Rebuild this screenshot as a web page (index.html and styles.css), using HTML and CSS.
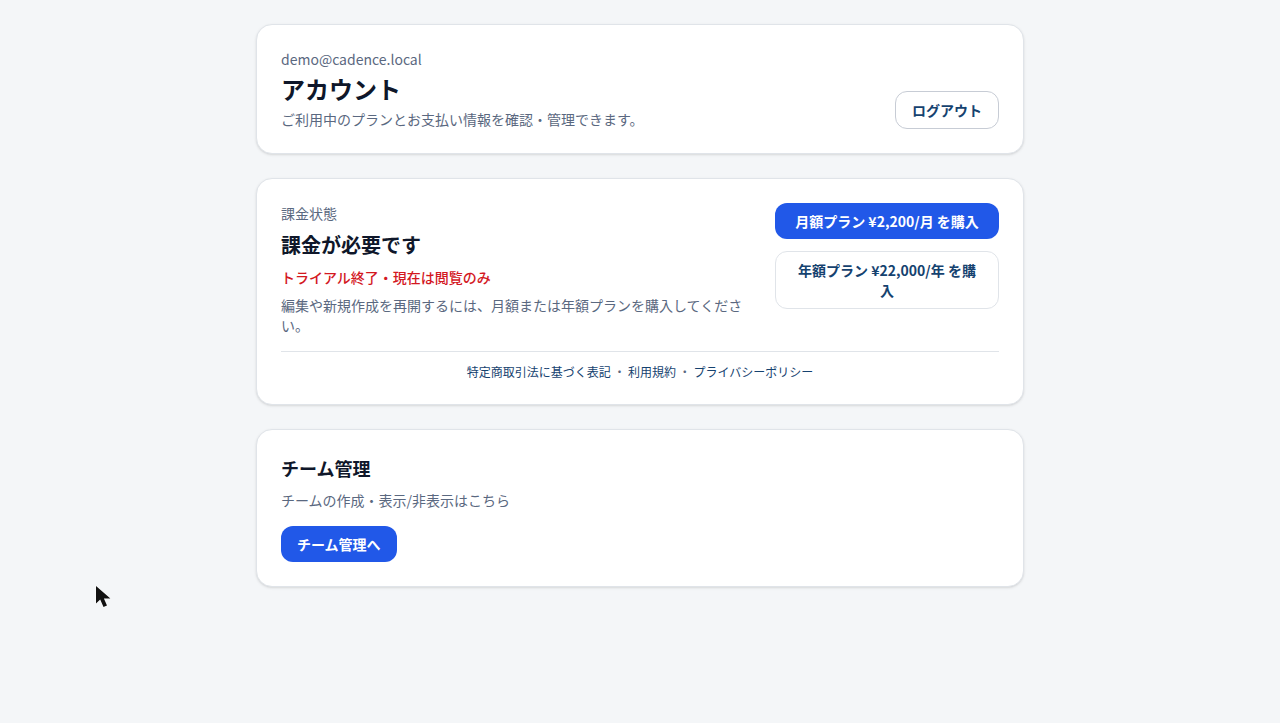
FILE: index.html
```html
<!DOCTYPE html>
<html lang="ja">
<head>
  <meta charset="utf-8">
  <title>アカウント</title>
  <link rel="stylesheet" href="styles.css">
</head>
<body>
  <main class="container">
    <section class="card account">
      <div>
        <p class="text">demo@cadence.local</p>
        <h1>アカウント</h1>
        <p class="text">ご利用中のプランとお支払い情報を確認・管理できます。</p>
      </div>
      <button type="button" class="btn btn-logout">ログアウト</button>
    </section>

    <section class="card">
      <div class="billing">
        <div class="billing-info">
          <p class="text">課金状態</p>
          <h2>課金が必要です</h2>
          <p class="text warning">トライアル終了・現在は閲覧のみ</p>
          <p class="text">編集や新規作成を再開するには、月額または年額プランを購入してください。</p>
        </div>
        <div class="plans">
          <button type="button" class="btn btn-primary">月額プラン ¥2,200/月 を購入</button>
          <button type="button" class="btn btn-outline">年額プラン ¥22,000/年 を購入</button>
        </div>
      </div>
      <div class="legal">
        <a href="#">特定商取引法に基づく表記</a>
        <span>・</span>
        <a href="#">利用規約</a>
        <span>・</span>
        <a href="#">プライバシーポリシー</a>
      </div>
    </section>

    <section class="card team">
      <h3>チーム管理</h3>
      <p class="text">チームの作成・表示/非表示はこちら</p>
      <button type="button" class="btn btn-primary">チーム管理へ</button>
    </section>
  </main>

  <svg class="cursor" width="18" height="24" viewBox="0 0 18 24">
    <path d="M1 1V18.5L5.2 14.6L8.5 22L12 20.5L8.9 13.4H15.4Z" fill="#111" stroke="#fff" stroke-width="1" paint-order="stroke"/>
  </svg>
</body>
</html>
```

FILE: styles.css
```css
* {
  box-sizing: border-box;
}

body {
  margin: 0;
  background: #f4f6f8;
  color: #0f172a;
  font-family: "Noto Sans CJK JP", sans-serif;
}

h1, h2, h3, p {
  margin: 0;
}

.container {
  display: flex;
  flex-direction: column;
  gap: 24px;
  max-width: 768px;
  margin: 0 auto;
  padding: 24px 0;
}

.card {
  padding: 24px;
  background: #fff;
  border: 1px solid #e0e4e9;
  border-radius: 16px;
  box-shadow: 0 1px 3px rgba(0, 0, 0, 0.1), 0 1px 2px -1px rgba(0, 0, 0, 0.1);
}

.account {
  display: flex;
  align-items: flex-end;
  justify-content: space-between;
}

h1 {
  margin: 4px 0;
  font-size: 24px;
  line-height: 32px;
}

h2 {
  font-size: 20px;
  line-height: 28px;
}

h3 {
  font-size: 18px;
  line-height: 28px;
}

.text {
  font-size: 14px;
  line-height: 20px;
  color: #5a6880;
}

.warning {
  color: #d3181f;
  font-weight: 500;
}

/* buttons */
.btn {
  padding: 8px 16px;
  border: 0;
  border-radius: 12px;
  background: #fff;
  color: #15426f;
  font-family: inherit;
  font-size: 14px;
  font-weight: 600;
  line-height: 20px;
  text-align: center;
}

.btn-primary {
  background: #2158e8;
  color: #fff;
}

.btn-logout {
  border: 1px solid #c7ccd5;
}

.btn-outline {
  border: 1px solid #e0e4e9;
}

/* billing */
.billing {
  display: flex;
  gap: 24px;
}

.billing-info {
  display: flex;
  flex: 1;
  flex-direction: column;
  gap: 8px;
}

.plans {
  display: flex;
  flex-direction: column;
  justify-content: flex-start;
  gap: 12px;
  width: 224px;
}

.legal {
  margin-top: 16px;
  padding-top: 12px;
  border-top: 1px solid #e0e4e9;
  color: #5a6880;
  font-size: 12px;
  line-height: 16px;
  text-align: center;
}

.legal a {
  color: #15426f;
  text-decoration: none;
}

/* team */
.team .text {
  margin: 8px 0 16px;
}

.team .btn {
  display: block;
}

.cursor {
  position: absolute;
  left: 95px;
  top: 585px;
}
```
